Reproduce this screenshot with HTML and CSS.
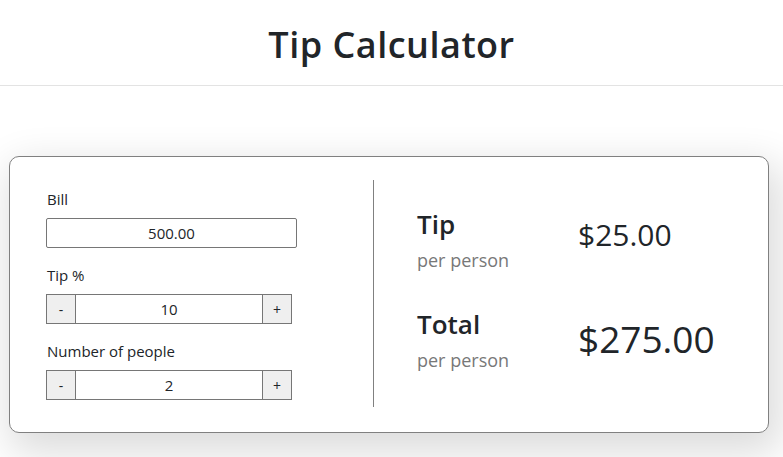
FILE: index.html
```html
<!DOCTYPE html>
<html lang="en">
<head>
<meta charset="utf-8">
<title>Tip Calculator</title>
<link rel="stylesheet" href="styles.css">
</head>
<body>
<header class="app-header">
  <h1 class="app-title">Tip Calculator</h1>
</header>
<main class="page">
  <section class="card">
    <div class="inputs">
      <div class="field">
        <label class="field-label" for="bill">Bill</label>
        <input id="bill" class="bill-input" type="text" value="500.00">
      </div>
      <div class="field">
        <label class="field-label" for="tip">Tip %</label>
        <div class="stepper">
          <button class="step-btn" type="button">-</button>
          <input id="tip" class="step-input" type="text" value="10">
          <button class="step-btn" type="button">+</button>
        </div>
      </div>
      <div class="field">
        <label class="field-label" for="people">Number of people</label>
        <div class="stepper">
          <button class="step-btn" type="button">-</button>
          <input id="people" class="step-input" type="text" value="2">
          <button class="step-btn" type="button">+</button>
        </div>
      </div>
    </div>
    <div class="results">
      <div class="result-row">
        <div class="result-label">
          <div class="result-title">Tip</div>
          <div class="result-sub">per person</div>
        </div>
        <div class="result-value">$25.00</div>
      </div>
      <div class="result-row">
        <div class="result-label">
          <div class="result-title">Total</div>
          <div class="result-sub">per person</div>
        </div>
        <div class="result-value result-value-big">$275.00</div>
      </div>
    </div>
  </section>
</main>
</body>
</html>
```
FILE: styles.css
```css
* { box-sizing: border-box; }
html, body { margin: 0; padding: 0; background: #fff; }
body {
  font-family: "Open Sans", "Noto Sans", sans-serif;
  color: #212529;
  font-size: 15px;
  min-height: 457px;
  overflow: hidden;
}
.app-header {
  height: 86px;
  border-bottom: 1px solid #e3e3e3;
  display: flex;
  justify-content: center;
  align-items: flex-start;
}
.app-title {
  margin: 0;
  padding-top: 23px;
  font-size: 36px;
  font-weight: 600;
  line-height: 1.2;
  letter-spacing: 0.5px;
}
.page {
  padding: 70px 14px 40px 9px;
}
.card {
  border: 1px solid #808080;
  border-radius: 10px;
  padding: 23px 0 25px 36px;
  display: flex;
  background: #fff;
  box-shadow: 6px 14px 40px 6px rgba(0, 0, 0, 0.14);
}
.inputs {
  width: 327px;
  height: 227px;
  display: flex;
  flex-direction: column;
  justify-content: center;
  gap: 15px;
}
.field { display: flex; flex-direction: column; }
.field-label {
  font-size: 15px;
  line-height: 24px;
  margin-bottom: 7px;
  padding-left: 1px;
}
.bill-input {
  width: 251px;
  height: 30px;
  border: 1px solid #767676;
  border-radius: 2px;
  font: inherit;
  font-size: 15px;
  text-align: center;
  color: #212529;
  padding: 0;
}
.stepper {
  display: flex;
  width: 246px;
  height: 30px;
}
.step-btn {
  width: 30px;
  height: 30px;
  border: 1px solid #767676;
  background: #efefef;
  font: inherit;
  font-size: 14px;
  color: #212529;
  padding: 0;
}
.step-input {
  flex: 1;
  min-width: 0;
  height: 30px;
  border: 1px solid #767676;
  border-left: 0;
  border-right: 0;
  font: inherit;
  font-size: 15px;
  text-align: center;
  color: #212529;
  padding: 0;
}
.results {
  border-left: 1px solid #808080;
  padding: 0 0 6px 43px;
  display: flex;
  flex-direction: column;
  justify-content: center;
  gap: 32px;
}
.result-row {
  display: flex;
  align-items: center;
}
.result-label {
  width: 161px;
  display: flex;
  flex-direction: column;
}
.result-title {
  font-size: 26px;
  font-weight: 600;
  line-height: 34px;
}
.result-sub {
  font-size: 18px;
  line-height: 30px;
  margin-top: 4px;
  color: #787878;
}
.result-value {
  font-size: 30px;
  line-height: 36px;
  margin-bottom: 12px;
}
.result-value-big {
  font-size: 37px;
  line-height: 44px;
  margin-bottom: 4px;
}
```
